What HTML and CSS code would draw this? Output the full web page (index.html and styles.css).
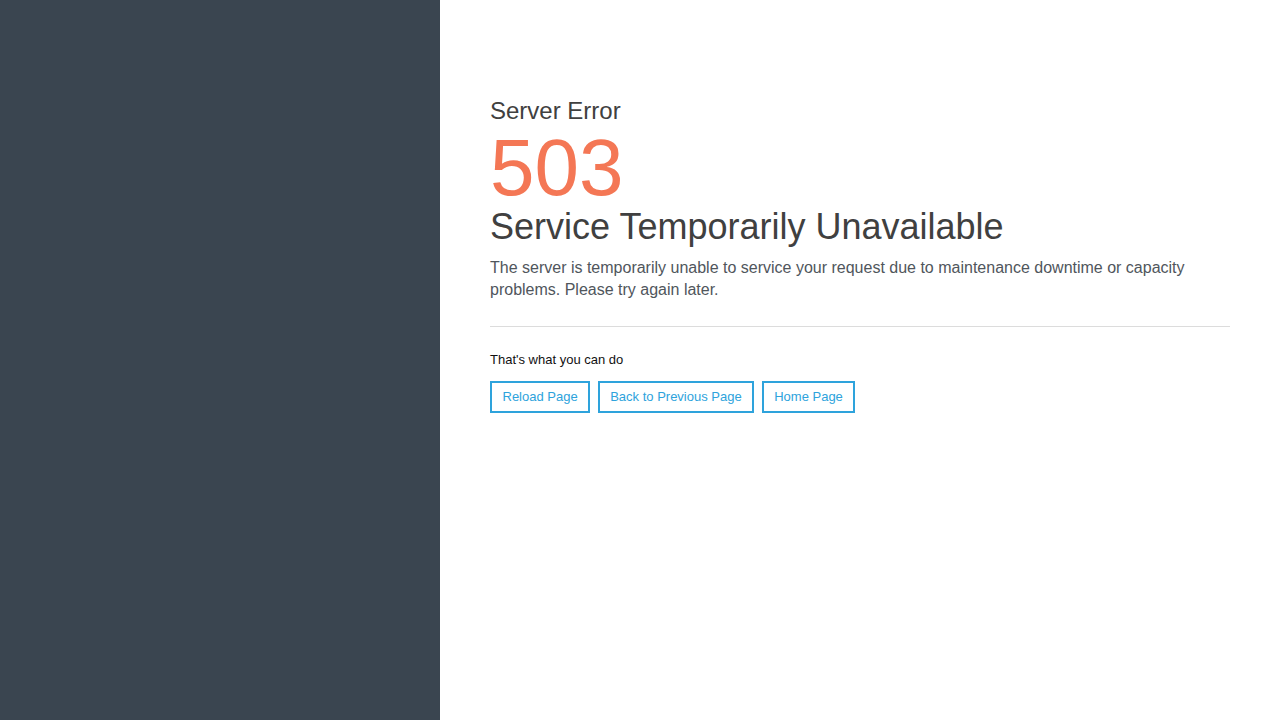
FILE: index.html
```html
<!DOCTYPE html>
<html>
<head>
<meta charset="utf-8">
<link rel="stylesheet" href="styles.css">
</head>
<body>
<div class="page">
  <aside class="side"></aside>
  <main class="main">
    <div class="sub">Server Error</div>
    <div class="code">503</div>
    <h1 class="title">Service Temporarily Unavailable</h1>
    <p class="desc">The server is temporarily unable to service your request due to maintenance downtime or capacity problems. Please try again later.</p>
    <hr class="rule">
    <div class="what">That's what you can do</div>
    <div class="actions">
      <a class="btn" href="#">Reload Page</a>
      <a class="btn" href="#">Back to Previous Page</a>
      <a class="btn" href="#">Home Page</a>
    </div>
  </main>
</div>
</body>
</html>
```

FILE: styles.css
```css
html, body { margin: 0; padding: 0; height: 100%; }
body { font-family: "Liberation Sans", Arial, sans-serif; background: #fff; }
.page { display: flex; height: 720px; }
.side { width: 440px; flex: none; background: #3a4550; }
.main { flex: 1; padding: 96px 50px 0 50px; }
.sub { font-size: 24px; line-height: 30px; color: #404040; }
.code { font-size: 80px; line-height: 78px; color: #f47755; margin-top: 3px; }
.title { font-size: 36px; line-height: 40px; font-weight: normal; color: #404040; margin: 0; }
.desc { font-size: 16px; line-height: 22px; color: #50565c; margin: 10px 0 0 0; }
.rule { border: 0; border-top: 1px solid #dcdcdc; margin: 25px 0 0 0; }
.what { font-size: 13px; line-height: 16px; color: #111; margin-top: 25px; }
.actions { display: flex; gap: 8px; margin-top: 13px; }
.btn { font-size: 13px; line-height: 16px; color: #2ea3dc; text-decoration: none; border: 2px solid #2ea3dc; padding: 6px 10px 6px 10.5px; }
```
